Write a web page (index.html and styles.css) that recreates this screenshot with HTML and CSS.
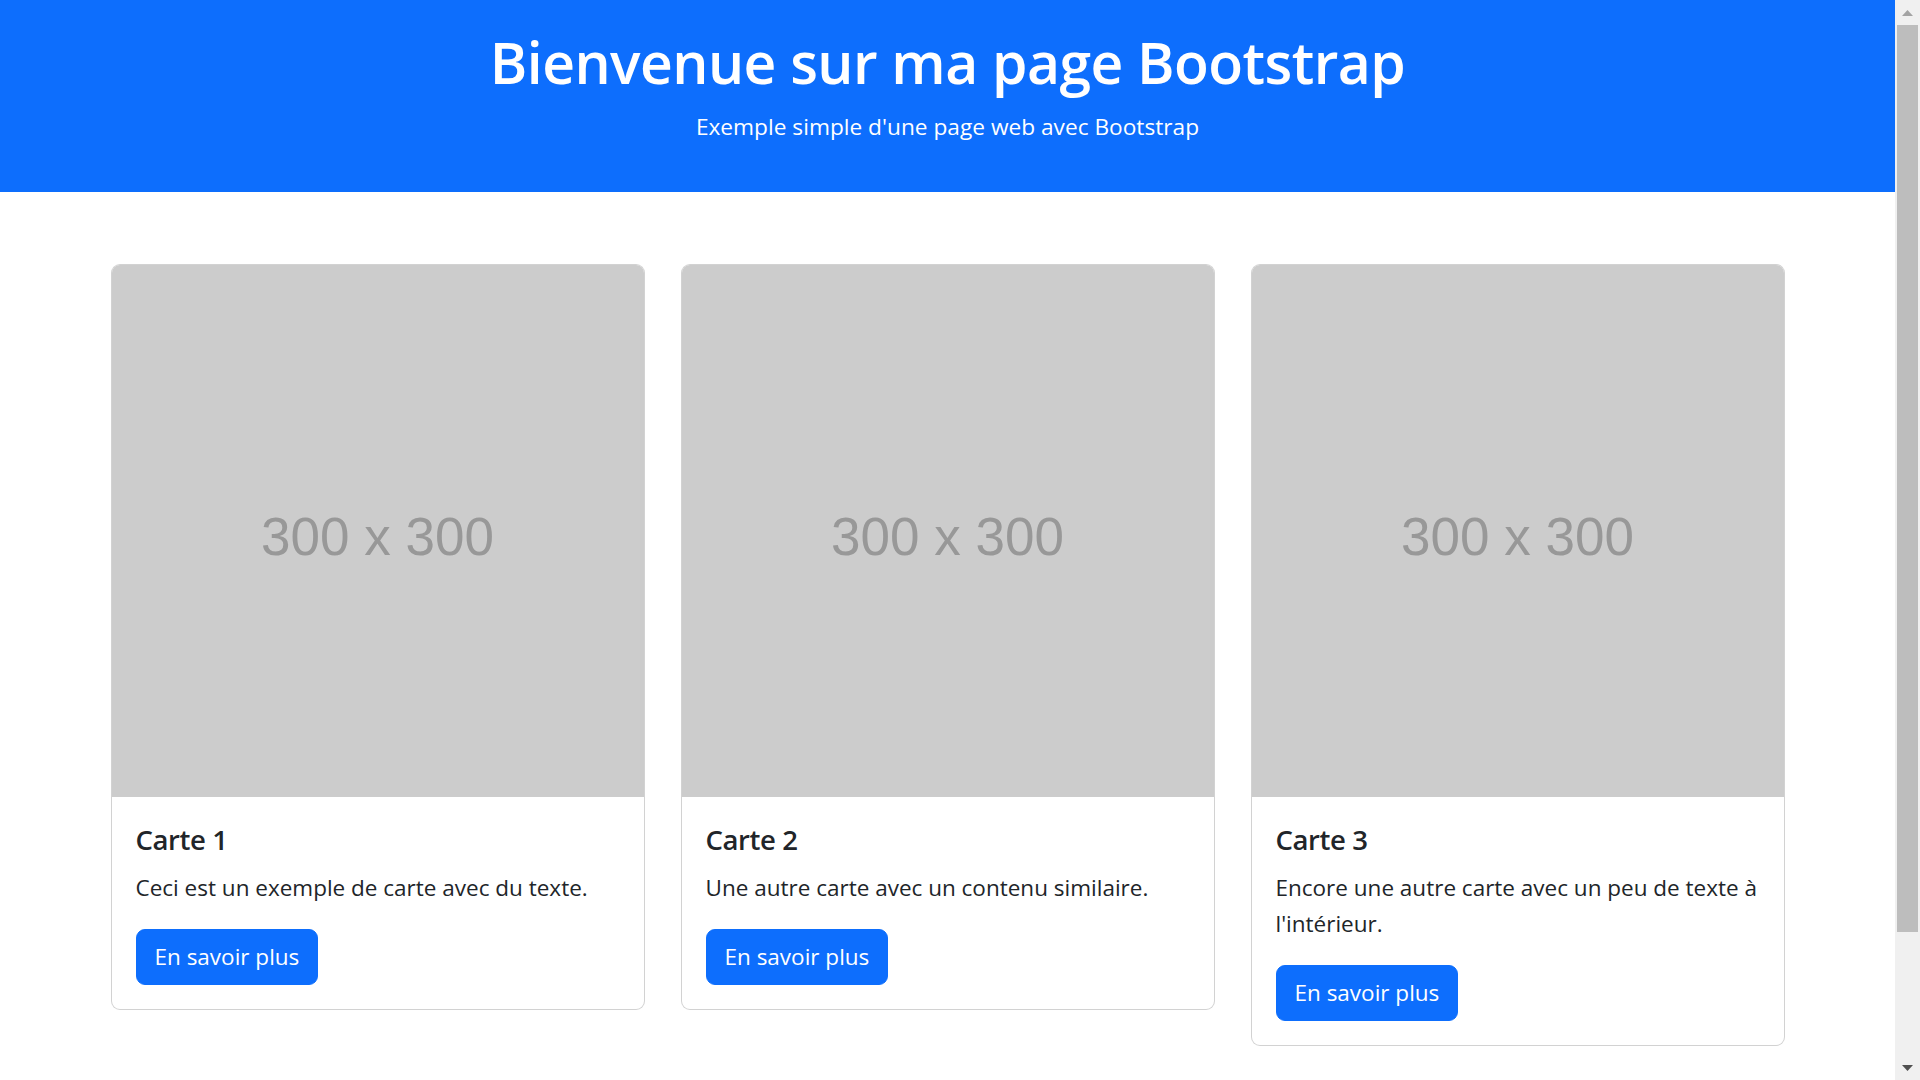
FILE: index.html
```html
<!DOCTYPE html>
<html lang="fr">
<head>
<meta charset="utf-8">
<title>Ma page Bootstrap</title>
<link rel="stylesheet" href="styles.css">
</head>
<body>
<div class="page">
  <header class="hero">
    <h1 class="hero-title">Bienvenue sur ma page Bootstrap</h1>
    <p class="hero-sub">Exemple simple d'une page web avec Bootstrap</p>
  </header>

  <main class="container">
    <div class="card">
      <div class="card-img"><span>300 x 300</span></div>
      <div class="card-body">
        <h5 class="card-title">Carte 1</h5>
        <p class="card-text">Ceci est un exemple de carte avec du texte.</p>
        <a class="btn" href="#">En savoir plus</a>
      </div>
    </div>
    <div class="card">
      <div class="card-img"><span>300 x 300</span></div>
      <div class="card-body">
        <h5 class="card-title">Carte 2</h5>
        <p class="card-text">Une autre carte avec un contenu similaire.</p>
        <a class="btn" href="#">En savoir plus</a>
      </div>
    </div>
    <div class="card">
      <div class="card-img"><span>300 x 300</span></div>
      <div class="card-body">
        <h5 class="card-title">Carte 3</h5>
        <p class="card-text">Encore une autre carte avec un peu de texte à l'intérieur.</p>
        <a class="btn" href="#">En savoir plus</a>
      </div>
    </div>
  </main>
</div>

<div class="scrollbar" aria-hidden="true">
  <div class="sb-btn sb-up">
    <svg width="11" height="6" viewBox="0 0 11 6"><path d="M0 6 L5.5 0 L11 6 Z"/></svg>
  </div>
  <div class="sb-track"><div class="sb-thumb"></div></div>
  <div class="sb-btn sb-down">
    <svg width="11" height="6" viewBox="0 0 11 6"><path d="M0 0 L11 0 L5.5 6 Z"/></svg>
  </div>
</div>
</body>
</html>
```
FILE: styles.css
```css
html, body {
  margin: 0;
  padding: 0;
  height: 100%;
  overflow: hidden;
  background: #fff;
}

body {
  display: flex;
  font-family: "Open Sans", "Noto Sans", sans-serif;
  color: #212529;
}

.page {
  flex: 1;
  min-width: 0;
  overflow: hidden;
}

/* Header */
.hero {
  background: #0d6efd;
  color: #fff;
  text-align: center;
  padding: 26px 0 23px;
}

.hero-title {
  margin: 0 0 10px;
  font-size: 57px;
  font-weight: 600;
  letter-spacing: -0.55px;
  line-height: 72px;
}

.hero-sub {
  margin: 0 0 24px;
  padding-top: 1px;
  font-size: 22.7px;
  line-height: 36px;
}

/* Cards */
.container {
  width: 1710px;
  box-sizing: border-box;
  margin: 72px auto 0;
  padding: 0 18px;
  display: grid;
  grid-template-columns: repeat(3, 1fr);
  column-gap: 36px;
  align-items: start;
}

.card {
  border: 1px solid rgba(0, 0, 0, 0.175);
  border-radius: 9px;
  overflow: hidden;
  background: #fff;
}

.card-img {
  aspect-ratio: 1 / 1;
  background: #cccccc;
  display: flex;
  align-items: center;
  justify-content: center;
  padding-top: 11px;
  box-sizing: border-box;
  font-family: "Liberation Sans", Arial, sans-serif;
  font-size: 53px;
  color: #989898;
}

.card-body {
  padding: 25px 24px 24px;
}

.card-title {
  margin: 0 0 12px;
  font-size: 27.5px;
  font-weight: 600;
  letter-spacing: -0.4px;
  line-height: 36px;
  color: #212529;
}

.card-text {
  margin: 0 0 24px;
  font-size: 22.5px;
  line-height: 36px;
  color: #212529;
}

.btn {
  display: inline-block;
  margin-top: -1px;
  padding: 9px 18px;
  border: 1px solid #0d6efd;
  border-radius: 9px;
  background: #0d6efd;
  color: #fff;
  font-size: 22.5px;
  line-height: 36px;
  text-decoration: none;
  vertical-align: top;
}

/* Fake window scrollbar */
.scrollbar {
  width: 25px;
  flex: none;
  background: #f0f0f0;
  display: flex;
  flex-direction: column;
}

.sb-btn {
  height: 25px;
  flex: none;
  display: flex;
  align-items: center;
  justify-content: center;
}

.sb-up svg { fill: #a3a3a3; }
.sb-down svg { fill: #505050; }

.sb-track {
  flex: 1;
  padding: 0 2px;
}

.sb-thumb {
  height: 907px;
  background: #bdbdbd;
}
```
